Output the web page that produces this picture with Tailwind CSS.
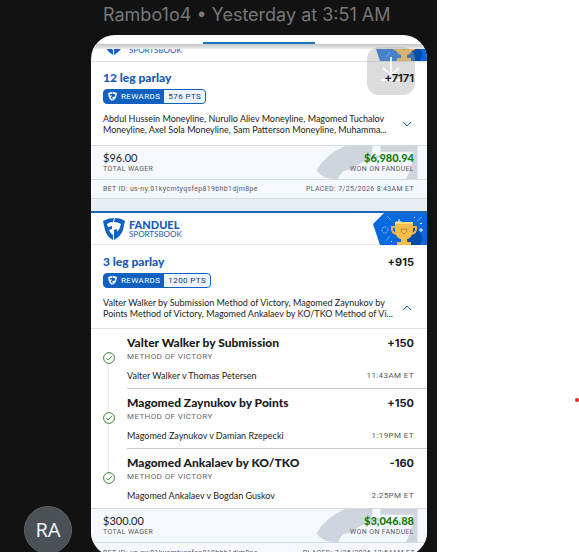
<!DOCTYPE html>
<html lang="en">
<head>
    <meta charset="UTF-8">
    <meta name="viewport" content="width=device-width, initial-scale=1.0">
    <title>Bet slip</title>
    <script src="https://cdn.jsdelivr.net/npm/@tailwindcss/browser@4"></script>
</head>
<body class="bg-white font-[Lato,sans-serif] text-[#1b1c20]">
    <!-- shared shapes -->
    <svg class="hidden">
        <symbol id="shield" viewBox="0 0 22 22">
            <path fill="currentColor" d="M0 3 Q5 0 11 0 L10 4 Q6 4 4 6 L5 9 L9 8 L9 11 L6 12 Q7 15 10 17 L10 22 Q4 19 2 12 Z"/>
            <path fill="currentColor" d="M12 0 Q18 0 22 3 L20 12 Q18 18 11 22 L11 12 L14 11 L14 14 Q17 11 18 6 Q15 4 11 4 Z"/>
        </symbol>
        <symbol id="watermark" viewBox="0 0 104 34">
            <path fill="#cfd5dd" d="M29 0 L104 0 L104 34 L92 34 Q99 22 100 6 L65 6 L65 12 Q44 15 37 24 L27 26 L22 34 L18 34 Q6 34 0 25 Q9 9 29 0 Z"/>
            <path fill="#f5f9ff" d="M58 0 L66 0 L66 9 L56 11 Z"/>
        </symbol>
        <symbol id="check" viewBox="0 0 12 12">
            <circle cx="6" cy="6" r="5.4" fill="white" stroke="#3b8a35"/>
            <path d="M3.4 6.2 L5.2 8 L8.8 4" fill="none" stroke="#3b8a35"/>
        </symbol>
        <symbol id="trophy" viewBox="0 0 54 32">
            <path fill="#0869de" d="M11 0 H54 V32 H7 L0 11 Z"/>
            <path d="M18 7 L14 3 M17 23 L13 28 M44 8 L49 4 M45 20 L50 24" stroke="#4fb4f4"/>
            <circle cx="12" cy="17" r="3" fill="none" stroke="#bfe0ff" stroke-dasharray="1 1"/>
            <path d="M26 6 V12 M23 9 H29 M48 15 V19 M46 17 H50" stroke="white"/>
            <path fill="white" d="M47 10h2v1h-2zM18 28h1v1h-1zM41 4h1v1h-1z"/>
            <path fill="#054caa" d="M41 12 L50 24 L47 32 H36 L34 25 Z"/>
            <path d="M24 14 H19 Q18 21 25 21 M38 14 H43 Q44 21 37 21" fill="none" stroke="#f1b543" stroke-width="2"/>
            <path fill="#f5bd4c" d="M22 9 H40 V18 Q39 25 34 26 V29 H38 V32 H24 V29 H28 V26 Q23 25 22 18 Z"/>
            <path fill="#ffda7a" d="M22 9 H40 V11 H22 Z"/>
            <path d="M28 16 H34 Q34 20 31 21 Q28 20 28 16 Z" fill="none" stroke="#c4882d"/>
        </symbol>
    </svg>

    <main class="flex h-screen overflow-hidden">
        <div class="relative w-[437px] shrink-0 bg-[#121212]">
            <p class="pl-[103px] pt-0.5 font-[Inter,sans-serif] text-lg leading-[26px] text-[#777777]">Rambo1o4 • Yesterday at 3:51 AM</p>

            <article class="relative ml-[91px] mr-2.5 mt-[7px] overflow-hidden rounded-3xl bg-white">
                <div class="flex h-[9px] items-end justify-center">
                    <div class="h-0.5 w-28 bg-[#1b78bf]"></div>
                </div>
                <div class="h-[5px] bg-linear-to-b from-[#c4c7ca] to-[#ececec]"></div>

                <!-- header scrolled under the tab bar -->
                <header class="flex h-[13px] items-end overflow-hidden border-b border-[#dfe1e4] pl-3">
                    <svg class="mb-1.5 h-[22px] w-[22px] text-[#1261c0]"><use href="#shield"/></svg>
                    <span class="mb-[7px] ml-1 text-[8px] leading-2 text-[#1659b4]">SPORTSBOOK</span>
                    <svg class="ml-auto h-8 w-[54px]"><use href="#trophy"/></svg>
                </header>

                <section class="h-[83px] pl-3 pr-[13px] pt-2">
                    <div class="flex justify-between leading-4">
                        <h2 class="text-xs/4 font-black text-[#1659b4]">12 leg parlay</h2>
                        <strong class="relative z-10 font-[Inter,sans-serif] text-[11px]">+7171</strong>
                    </div>
                    <div class="mt-[3px] flex h-[15px] w-fit items-center overflow-hidden rounded-sm border border-[#1261c0] bg-[#1261c0] font-[Roboto,sans-serif] text-[8px] leading-[13px] tracking-wider">
                        <svg class="mx-1 h-[9px] w-[9px] text-white"><use href="#shield"/></svg>
                        <span class="pr-1 text-white">REWARDS</span>
                        <span class="bg-[#edf6ff] px-1 text-[#17345e]">576 PTS</span>
                    </div>
                    <div class="mt-[9px] flex items-center justify-between">
                        <p class="whitespace-nowrap text-[9px] leading-[11px]">Abdul Hussein Moneyline, Nurullo Aliev Moneyline, Magomed Tuchalov<br>Moneyline, Axel Sola Moneyline, Sam Patterson Moneyline, Muhamma...</p>
                        <button aria-label="Show legs" class="mr-0.5 shrink-0"><svg class="h-2.5 w-2.5" viewBox="0 0 10 10"><path d="M1 3 L5 7 L9 3" fill="none" stroke="#1267bd"/></svg></button>
                    </div>
                </section>

                <footer class="relative flex h-[34px] justify-between border-t border-[#d5dbe2] bg-[#f5f9ff] pl-3 pr-[13px] pt-1.5">
                    <svg class="absolute right-2 top-0 h-[33px] w-[104px]"><use href="#watermark"/></svg>
                    <div>
                        <p class="text-[11px] leading-3">$96.00</p>
                        <p class="font-[Roboto,sans-serif] text-[7px] leading-[10px] tracking-wider text-[#55585e]">TOTAL WAGER</p>
                    </div>
                    <div class="relative text-right">
                        <p class="text-[11px] font-black leading-3 text-[#167b0c]">$6,980.94</p>
                        <p class="font-[Roboto,sans-serif] text-[7px] leading-[10px] tracking-wider text-[#55585e]">WON ON FANDUEL</p>
                    </div>
                </footer>
                <div class="flex h-5 items-center justify-between border-y border-[#d5dbe2] bg-[#f5f9ff] pl-3 pr-[13px] font-[Roboto,sans-serif] text-[7px] tracking-wider text-[#55585e]">
                    <span>BET ID: us-ny:01kycmtyqsfep819bhb1djm8pe</span>
                    <span>PLACED: 7/25/2026 8:43AM ET</span>
                </div>
                <div class="h-3 bg-[#e9eef5]"></div>

                <header class="flex h-[34px] items-center border-b border-t-2 border-b-[#e6e8eb] border-t-[#1b68bb] pl-3">
                    <svg class="h-[22px] w-[22px] text-[#1261c0]"><use href="#shield"/></svg>
                    <div class="ml-1 text-[#1659b4]">
                        <p class="text-[11px] font-black leading-[10px]">FANDUEL</p>
                        <p class="text-[8px] leading-2">SPORTSBOOK</p>
                    </div>
                    <svg class="ml-auto h-8 w-[54px]"><use href="#trophy"/></svg>
                </header>

                <section class="h-[84px] border-b border-[#dfe1e4] pl-3 pr-[13px] pt-[9px]">
                    <div class="flex justify-between leading-4">
                        <h2 class="text-xs/4 font-black text-[#1659b4]">3 leg parlay</h2>
                        <strong class="font-[Inter,sans-serif] text-[11px]">+915</strong>
                    </div>
                    <div class="mt-[3px] flex h-[15px] w-fit items-center overflow-hidden rounded-sm border border-[#1261c0] bg-[#1261c0] font-[Roboto,sans-serif] text-[8px] leading-[13px] tracking-wider">
                        <svg class="mx-1 h-[9px] w-[9px] text-white"><use href="#shield"/></svg>
                        <span class="pr-1 text-white">REWARDS</span>
                        <span class="bg-[#edf6ff] px-1 text-[#17345e]">1200 PTS</span>
                    </div>
                    <div class="mt-[9px] flex items-center justify-between">
                        <p class="whitespace-nowrap text-[9px] leading-[11px]">Valter Walker by Submission Method of Victory, Magomed Zaynukov by<br>Points Method of Victory, Magomed Ankalaev by KO/TKO Method of Vi...</p>
                        <button aria-label="Hide legs" class="mr-0.5 shrink-0"><svg class="h-2.5 w-2.5" viewBox="0 0 10 10"><path d="M1 7 L5 3 L9 7" fill="none" stroke="#1267bd"/></svg></button>
                    </div>
                </section>

                <ul class="relative pl-9">
                    <li class="absolute bottom-8 left-[17px] top-8 w-px bg-[#ececec]"></li>
                    <li class="relative h-[60px] border-b border-[#c9cacc] pr-[13px] pt-1.5">
                        <svg class="absolute -left-6 top-[23px] h-3 w-3"><use href="#check"/></svg>
                        <div class="flex justify-between leading-4">
                            <h3 class="text-xs/4 font-black">Valter Walker by Submission</h3>
                            <strong class="font-[Inter,sans-serif] text-[11px]">+150</strong>
                        </div>
                        <p class="font-[Roboto,sans-serif] text-[8px] leading-[11px] tracking-wider text-[#66686c]">METHOD OF VICTORY</p>
                        <div class="mt-1.5 flex justify-between leading-4">
                            <span class="text-[9px]">Valter Walker v Thomas Petersen</span>
                            <span class="font-[Roboto,sans-serif] text-[8px] tracking-wider text-[#55585e]">11:43AM ET</span>
                        </div>
                    </li>
                    <li class="relative h-[60px] border-b border-[#c9cacc] pr-[13px] pt-1.5">
                        <svg class="absolute -left-6 top-[23px] h-3 w-3"><use href="#check"/></svg>
                        <div class="flex justify-between leading-4">
                            <h3 class="text-xs/4 font-black">Magomed Zaynukov by Points</h3>
                            <strong class="font-[Inter,sans-serif] text-[11px]">+150</strong>
                        </div>
                        <p class="font-[Roboto,sans-serif] text-[8px] leading-[11px] tracking-wider text-[#66686c]">METHOD OF VICTORY</p>
                        <div class="mt-1.5 flex justify-between leading-4">
                            <span class="text-[9px]">Magomed Zaynukov v Damian Rzepecki</span>
                            <span class="font-[Roboto,sans-serif] text-[8px] tracking-wider text-[#55585e]">1:19PM ET</span>
                        </div>
                    </li>
                    <li class="relative h-[59px] pr-[13px] pt-1.5">
                        <svg class="absolute -left-6 top-[23px] h-3 w-3"><use href="#check"/></svg>
                        <div class="flex justify-between leading-4">
                            <h3 class="text-xs/4 font-black">Magomed Ankalaev by KO/TKO</h3>
                            <strong class="font-[Inter,sans-serif] text-[11px]">-160</strong>
                        </div>
                        <p class="font-[Roboto,sans-serif] text-[8px] leading-[11px] tracking-wider text-[#66686c]">METHOD OF VICTORY</p>
                        <div class="mt-1.5 flex justify-between leading-4">
                            <span class="text-[9px]">Magomed Ankalaev v Bogdan Guskov</span>
                            <span class="font-[Roboto,sans-serif] text-[8px] tracking-wider text-[#55585e]">2:25PM ET</span>
                        </div>
                    </li>
                </ul>

                <footer class="relative flex h-[34px] justify-between border-t border-[#d5dbe2] bg-[#f5f9ff] pl-3 pr-[13px] pt-1.5">
                    <svg class="absolute right-2 top-0 h-[33px] w-[104px]"><use href="#watermark"/></svg>
                    <div>
                        <p class="text-[11px] leading-3">$300.00</p>
                        <p class="font-[Roboto,sans-serif] text-[7px] leading-[10px] tracking-wider text-[#55585e]">TOTAL WAGER</p>
                    </div>
                    <div class="relative text-right">
                        <p class="text-[11px] font-black leading-3 text-[#167b0c]">$3,046.88</p>
                        <p class="font-[Roboto,sans-serif] text-[7px] leading-[10px] tracking-wider text-[#55585e]">WON ON FANDUEL</p>
                    </div>
                </footer>
                <div class="flex h-3.5 items-start justify-between border-t border-[#d5dbe2] bg-[#f5f9ff] px-3 pt-1.5 font-[Roboto,sans-serif] text-[7px] leading-[9px] tracking-wider text-[#55585e]">
                    <span>BET ID: us-ny:01kycmtyqsfep819bhb1djm8pe</span>
                    <span>PLACED: 7/25/2026 12:54AM ET</span>
                </div>

                <button aria-label="Download" class="absolute right-3 top-3 flex h-12 w-12 justify-center rounded-xl bg-[#a8a8a8]/40 pt-2.5 text-white/80">
                    <svg class="h-6 w-6" viewBox="0 0 24 24" fill="none" stroke="currentColor" stroke-width="2"><path d="M12 0 V17 M4 11 L12 18 L20 11 M2 23 H22"/></svg>
                </button>
            </article>

            <div class="absolute -bottom-0.5 left-6 flex h-12 w-12 items-center justify-center rounded-full border border-[#5c6168] bg-[#4b5057] font-['Noto_Sans',sans-serif] text-xl text-[#eceef0]">RA</div>
        </div>
        <div class="relative grow">
            <span class="absolute right-0 top-[398px] h-1 w-1 rounded-full bg-[#f02020]"></span>
        </div>
    </main>
</body>
</html>
